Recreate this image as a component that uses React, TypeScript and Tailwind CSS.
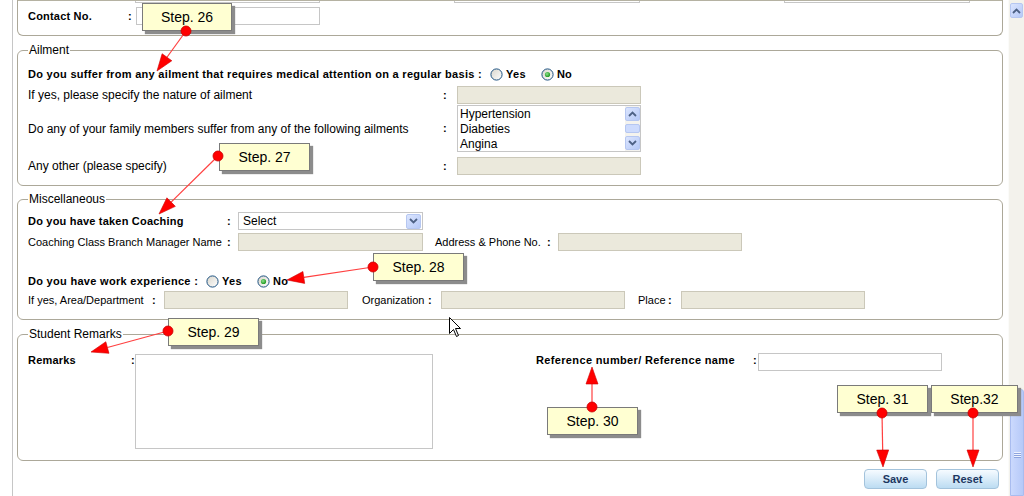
import React from 'react';

type Pt = [number, number];

const Field = ({ className = '', disabled = false }: { className?: string; disabled?: boolean }) => (
  <div
    className={`h-[18px] shrink-0 border ${
      disabled ? 'border-[#cbc8b9] bg-[#ebe9dc]' : 'border-[#c6c6c6] bg-white'
    } ${className}`}
  />
);

function Radio({ checked = false, className = '' }: { checked?: boolean; className?: string }) {
  return (
    <svg width="13" height="13" viewBox="0 0 13 13" className={`shrink-0 ${className}`}>
      <defs>
        <linearGradient id="radioFill" x1="0" y1="0" x2="1" y2="1">
          <stop offset="0" stopColor="#d8d5cb" />
          <stop offset="1" stopColor="#ffffff" />
        </linearGradient>
        <radialGradient id="radioDot" cx="0.4" cy="0.4" r="0.6">
          <stop offset="0" stopColor="#8ee08e" />
          <stop offset="1" stopColor="#1f9a1f" />
        </radialGradient>
      </defs>
      <circle cx="6.5" cy="6.5" r="5.6" fill="url(#radioFill)" stroke="#1c5180" strokeWidth="1" />
      {checked && <circle cx="6.5" cy="6.5" r="2.6" fill="url(#radioDot)" />}
    </svg>
  );
}

function Chevron({ down = false }: { down?: boolean }) {
  return (
    <svg width="9" height="6" viewBox="0 0 9 6">
      <path
        d={down ? 'M1 1 L4.5 4.5 L8 1' : 'M1 5 L4.5 1.5 L8 5'}
        fill="none"
        stroke="#4d6185"
        strokeWidth="1.8"
      />
    </svg>
  );
}

const XpButton = ({ down = false, className = '' }: { down?: boolean; className?: string }) => (
  <div
    className={`flex items-center justify-center rounded-[2px] border border-[#b6c7f1] bg-gradient-to-br from-[#dbe5fe] to-[#b6c9f7] ${className}`}
  >
    <Chevron down={down} />
  </div>
);

const Colon = ({ className = '' }: { className?: string }) => (
  <span className={`shrink-0 text-[11px] font-bold ${className}`}>:</span>
);

// Callout boxes laid over the form
const callouts = [
  { label: 'Step. 26', cls: 'left-[142px] top-[3px] w-[90px]' },
  { label: 'Step. 27', cls: 'left-[219px] top-[143px] w-[91px]' },
  { label: 'Step. 28', cls: 'left-[373px] top-[253px] w-[91px]' },
  { label: 'Step. 29', cls: 'left-[168px] top-[318px] w-[91px]' },
  { label: 'Step. 30', cls: 'left-[547px] top-[407px] w-[91px]' },
  { label: 'Step. 31', cls: 'left-[837px] top-[385px] w-[91px]' },
  { label: 'Step.32', cls: 'left-[931px] top-[385px] w-[87px]' },
];

const arrows: { from: Pt; to: Pt }[] = [
  { from: [186, 31], to: [157, 71] },
  { from: [218, 156], to: [159, 214] },
  { from: [373, 267], to: [287, 280] },
  { from: [168, 331], to: [91, 352] },
  { from: [592, 407], to: [592, 367] },
  { from: [882, 413], to: [883, 467] },
  { from: [973, 413], to: [973, 467] },
];

function Arrow({ from, to }: { from: Pt; to: Pt }) {
  const dx = to[0] - from[0];
  const dy = to[1] - from[1];
  const len = Math.hypot(dx, dy);
  const ux = dx / len;
  const uy = dy / len;
  const head = 17;
  const half = 6;
  const bx = to[0] - ux * head;
  const by = to[1] - uy * head;
  const pts = `${to[0]},${to[1]} ${bx - uy * half},${by + ux * half} ${bx + uy * half},${by - ux * half}`;
  return (
    <g>
      <line x1={from[0]} y1={from[1]} x2={bx} y2={by} stroke="#ff4040" strokeWidth="1.2" />
      <polygon points={pts} fill="#ff0000" stroke="#cc0000" strokeWidth="0.6" />
      <circle cx={from[0]} cy={from[1]} r="5" fill="#ff0000" stroke="#c80000" strokeWidth="0.8" />
    </g>
  );
}

export default function App() {
  return (
    <div className="relative flex h-[496px] w-[1024px] overflow-hidden bg-white font-['Liberation_Sans',Arial,sans-serif] text-black">
      {/* Page content */}
      <div className="w-[1008px] shrink-0 pl-[12px]">
        <div className="h-full border-l border-[#c6c6c6] pl-[4px] pr-[5px]">
          {/* Tail of the contact section */}
          <div className="h-[36px] rounded-b-[6px] border-x border-b border-[#aca899]">
            <div className="flex h-[3px] border-t border-[#b5b2a2]">
              <div className="ml-[117px] h-[2px] w-[185px] border-x border-b border-[#c6c6c6]" />
              <div className="ml-[134px] h-[2px] w-[186px] border-x border-b border-[#c6c6c6]" />
              <div className="ml-[144px] h-[2px] w-[186px] border-x border-b border-[#c6c6c6]" />
            </div>
            <div className="mt-[4px] flex h-[18px] items-center pl-[10px]">
              <span className="w-[100px] shrink-0 text-[11px] font-bold tracking-[0.2px]">Contact No.</span>
              <Colon className="w-[8px]" />
              <Field className="w-[184px]" />
            </div>
          </div>

          {/* Ailment */}
          <fieldset className="mt-[7px] rounded-[6px] border border-[#aca899] px-[10px] pb-[10px]">
            <legend className="px-[1px] text-[12px] leading-[14px]">Ailment</legend>
            <div className="mt-[8px] flex h-[18px] items-center text-[11px] font-bold tracking-[0.3px]">
              <span>Do you suffer from any ailment that requires medical attention on a regular basis :</span>
              <Radio className="ml-[8px]" />
              <span className="ml-[3px]">Yes</span>
              <Radio className="ml-[15px]" checked />
              <span className="ml-[3px]">No</span>
            </div>
            <div className="mt-[3px] flex h-[18px] items-center text-[12px]">
              <span className="w-[415px] shrink-0">If yes, please specify the nature of ailment</span>
              <Colon className="w-[14px]" />
              <Field disabled className="w-[184px]" />
            </div>
            <div className="mt-[1px] flex h-[47px] items-center text-[12px]">
              <span className="w-[415px] shrink-0">Do any of your family members suffer from any of the following ailments</span>
              <Colon className="w-[14px]" />
              <div className="flex h-[47px] w-[184px] shrink-0 border border-[#c6c6c6] bg-white">
                <div className="flex-1 pl-[2px] pt-[1px] text-[12px] leading-[15px]">
                  <div>Hypertension</div>
                  <div>Diabeties</div>
                  <div>Angina</div>
                </div>
                <div className="flex w-[15px] flex-col bg-[#f4f3ee] py-[1px]">
                  <XpButton className="h-[14px]" />
                  <div className="flex flex-1 items-center">
                    <div className="h-[9px] w-full rounded-[2px] border border-[#b6c7f1] bg-[#cddbfd]" />
                  </div>
                  <XpButton down className="h-[14px]" />
                </div>
              </div>
            </div>
            <div className="mt-[5px] flex h-[18px] items-center text-[12px]">
              <span className="w-[415px] shrink-0">Any other (please specify)</span>
              <Colon className="w-[14px]" />
              <Field disabled className="w-[184px]" />
            </div>
          </fieldset>

          {/* Miscellaneous */}
          <fieldset className="mt-[6px] rounded-[6px] border border-[#aca899] px-[10px] pb-[10px]">
            <legend className="px-[1px] text-[12px] leading-[14px]">Miscellaneous</legend>
            <div className="mt-[6px] flex h-[18px] items-center">
              <span className="w-[199px] shrink-0 text-[11px] font-bold tracking-[0.2px]">Do you have taken Coaching</span>
              <Colon className="w-[11px]" />
              <div className="flex h-[18px] w-[185px] shrink-0 items-center border border-[#c6c6c6] bg-white pl-[4px] pr-[1px]">
                <span className="flex-1 text-[12px]">Select</span>
                <XpButton down className="h-[15px] w-[15px]" />
              </div>
            </div>
            <div className="mt-[3px] flex h-[18px] items-center text-[11px]">
              <span className="w-[199px] shrink-0">Coaching Class Branch Manager Name</span>
              <Colon className="w-[11px]" />
              <Field disabled className="w-[185px]" />
              <span className="ml-[12px] w-[112px] shrink-0">Address &amp; Phone No.</span>
              <Colon className="w-[11px]" />
              <Field disabled className="w-[184px]" />
            </div>
            <div className="mt-[21px] flex h-[18px] items-center text-[11px] font-bold tracking-[0.3px]">
              <span>Do you have work experience :</span>
              <Radio className="ml-[8px]" />
              <span className="ml-[3px]">Yes</span>
              <Radio className="ml-[15px]" checked />
              <span className="ml-[3px]">No</span>
            </div>
            <div className="mt-[1px] flex h-[18px] items-center text-[11px]">
              <span className="w-[124px] shrink-0">If yes, Area/Department</span>
              <Colon className="w-[12px]" />
              <Field disabled className="w-[184px]" />
              <span className="ml-[14px] w-[66px] shrink-0">Organization</span>
              <Colon className="w-[13px]" />
              <Field disabled className="w-[184px]" />
              <span className="ml-[13px] w-[30px] shrink-0">Place</span>
              <Colon className="w-[13px]" />
              <Field disabled className="w-[184px]" />
            </div>
          </fieldset>

          {/* Student Remarks */}
          <fieldset className="mt-[7px] rounded-[6px] border border-[#aca899] px-[10px] pb-[11px]">
            <legend className="px-[1px] text-[12px] leading-[14px]">Student Remarks</legend>
            <div className="mt-[12px] flex items-start">
              <span className="w-[103px] shrink-0 text-[11px] font-bold leading-[14px] tracking-[0.2px]">Remarks</span>
              <Colon className="w-[4px] leading-[14px]" />
              <div className="mt-[1px] h-[95px] w-[298px] shrink-0 border border-[#c6c6c6] bg-white" />
              <span className="ml-[103px] w-[217px] shrink-0 text-[11px] font-bold leading-[14px] tracking-[0.35px]">
                Reference number/ Reference name
              </span>
              <Colon className="w-[5px] leading-[14px]" />
              <Field className="w-[184px]" />
            </div>
          </fieldset>

          <div className="mt-[8px] flex justify-end gap-[9px] pr-[4px]">
            <button className="h-[20px] w-[63px] rounded-[4px] border border-[#a3c3dc] bg-gradient-to-b from-[#f6fbff] to-[#bcdcf2] text-[11px] font-bold text-[#1c3761]">
              Save
            </button>
            <button className="h-[20px] w-[63px] rounded-[4px] border border-[#a3c3dc] bg-gradient-to-b from-[#f6fbff] to-[#bcdcf2] text-[11px] font-bold text-[#1c3761]">
              Reset
            </button>
          </div>
        </div>
      </div>

      {/* Window scrollbar */}
      <div className="flex w-[16px] shrink-0 flex-col border-l border-[#fbfbf9] bg-[#f3f2ec]">
        <XpButton className="mx-[1px] mt-[3px] h-[15px]" />
        <div className="flex-1" />
        <div className="ml-[1px] flex h-[107px] flex-col items-center rounded-t-[3px] border border-[#a9bcef] bg-gradient-to-r from-[#cbd9fd] to-[#b6c9f8] pt-[62px]">
          <div className="h-[1px] w-[7px] bg-[#eef3ff]" />
          <div className="h-[1px] w-[7px] bg-[#8da3de]" />
          <div className="h-[1px] w-[7px] bg-[#eef3ff]" />
          <div className="h-[1px] w-[7px] bg-[#8da3de]" />
          <div className="h-[1px] w-[7px] bg-[#eef3ff]" />
          <div className="h-[1px] w-[7px] bg-[#8da3de]" />
        </div>
      </div>

      {/* Step callouts */}
      {callouts.map((c) => (
        <div
          key={c.label}
          className={`absolute flex h-[28px] items-center justify-center border border-[#7a7a7a] bg-[#ffffd2] text-[14px] shadow-[3px_3px_1px_#8c8c8c] ${c.cls}`}
        >
          {c.label}
        </div>
      ))}

      <svg className="pointer-events-none absolute left-0 top-0" width="1024" height="496">
        {arrows.map((a, i) => (
          <Arrow key={i} from={a.from} to={a.to} />
        ))}
        {/* mouse pointer */}
        <path
          d="M449.5 317.5 L449.5 333.5 L453.5 329.5 L456.5 336.5 L458.5 335.5 L455.5 328.5 L460.5 328.5 Z"
          fill="#ffffff"
          stroke="#000000"
          strokeWidth="1"
        />
      </svg>
    </div>
  );
}
